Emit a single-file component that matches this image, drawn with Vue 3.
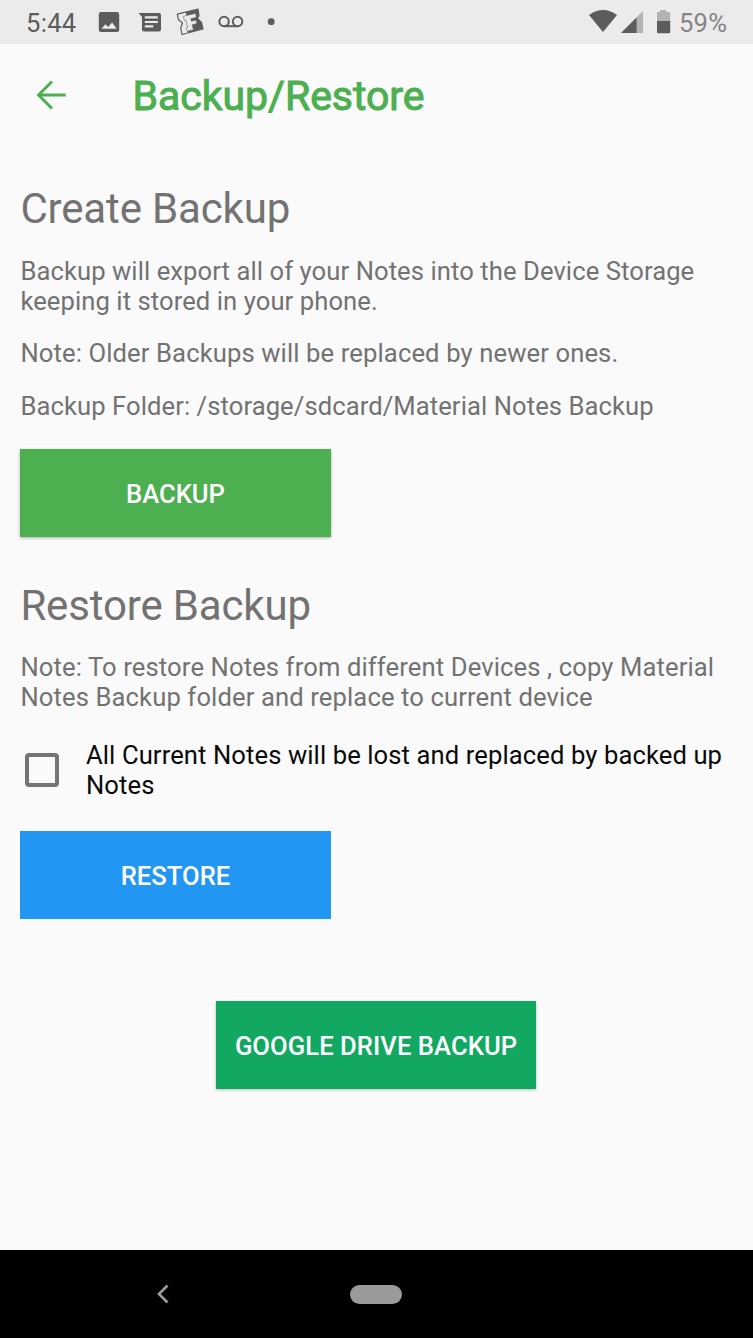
<script setup>
import { ref } from 'vue'

const confirmed = ref(false)
</script>

<template>
  <div class="screen">
    <div class="status">
      <span class="clock">5:44</span>
      <svg class="notifications" width="180" height="44" viewBox="0 0 180 44">
        <g fill="#5c5c5c">
          <path fill-rule="evenodd" d="M6 12h16a2.200 2.200 0 0 1 2.200 2.200v15.600a2.200 2.200 0 0 1-2.200 2.200H6a2.200 2.200 0 0 1-2.200-2.200V14.200A2.200 2.200 0 0 1 6 12zM6.500 28.700h15.200l-4.600-6.300-4 4.700-2.700-2.900z" />
          <path fill-rule="evenodd" d="M43.500 13H64a2 2 0 0 1 2 2v14.500a2 2 0 0 1-2 2H49a2 2 0 0 1-2-2V17zM49.800 16.300v2.200h13v-2.200zM49.800 20.900v2.200h13v-2.200zM49.800 25.300v2.200h8.500v-2.200z" />
          <path d="M91 12.200 103 9.200 104 15.500 102.500 18.500 106.500 22.500 108 29 93 32.800 92 25z" />
        </g>
        <path d="M82.300 14.200 103 9.200 104 15.500 102.500 18.500 106.500 22.500 108 29 87 34.500 85.700 28 87.500 23 83.500 19.800z" fill="none" stroke="#5c5c5c" stroke-width="1.200" stroke-linejoin="round" />
        <path d="M88.300 16.300 100.500 13.400 101.400 17.300 95.800 18.700 96.400 21.200 101 20.100 101.800 23.500 97.200 24.700 98.400 29.700 92 31.300 91.300 28 92.600 27.600 90.800 19.800 89.200 20.200z" fill="#ebebeb" stroke="#5c5c5c" stroke-width="0.500" />
        <g fill="none" stroke="#5c5c5c" stroke-width="2">
          <circle cx="129.100" cy="21.500" r="4.700" />
          <circle cx="142.600" cy="21.500" r="4.700" />
          <path d="M129 26.200h13.600" />
        </g>
        <circle cx="176.200" cy="21.700" r="3.400" fill="#5c5c5c" />
      </svg>
      <svg class="signals" width="90" height="44" viewBox="0 0 90 44">
        <path d="M4 15q14-10 28 0L18 32z" fill="#5c5c5c" />
        <path d="M58 11v22H36z" fill="#b3b3b3" />
        <path d="M51.600 17.400V33H36z" fill="#5c5c5c" />
        <path d="M72 12h3v-2h6v2h3a1.200 1.200 0 0 1 1.200 1.200V22H72z" fill="#b3b3b3" />
        <path d="M72 21h13.200v11a1.200 1.200 0 0 1-1.200 1.200H73.200A1.200 1.200 0 0 1 72 32z" fill="#5c5c5c" />
      </svg>
      <span class="percent">59%</span>
    </div>

    <header class="toolbar">
      <svg width="32" height="32" viewBox="0 0 32 32" fill="none" stroke="#4caf50" stroke-width="2.900">
        <path d="M30.700 16H4M17 2.500 3.500 16 17 29.500" />
      </svg>
      <h1>Backup/Restore</h1>
    </header>

    <main class="content">
      <h2 class="create-title">Create Backup</h2>
      <p class="t1">Backup will export all of your Notes into the Device Storage<br />keeping it stored in your phone.</p>
      <p class="t2">Note: Older Backups will be replaced by newer ones.</p>
      <p class="t3">Backup Folder: /storage/sdcard/Material Notes Backup</p>
      <button class="btn backup">BACKUP</button>

      <h2 class="restore-title">Restore Backup</h2>
      <p class="t4">Note: To restore Notes from different Devices , copy Material<br />Notes Backup folder and replace to current device</p>
      <label class="check">
        <input v-model="confirmed" type="checkbox" />
        <span>All Current Notes will be lost and replaced by backed up<br />Notes</span>
      </label>
      <button class="btn restore">RESTORE</button>
      <button class="btn drive">GOOGLE DRIVE BACKUP</button>
    </main>

    <nav class="navbar">
      <svg width="16" height="22" viewBox="0 0 16 22" fill="none" stroke="#9a9a9a" stroke-width="2.700">
        <path d="M12.500 2.500 4 11l8.500 8.500" />
      </svg>
      <span class="home"></span>
    </nav>
  </div>
</template>

<style>
body {
  margin: 0;
  background: #fafafa;
}
</style>

<style scoped>
.screen {
  display: flex;
  flex-direction: column;
  width: 753px;
  height: 1338px;
  overflow: hidden;
  background: #fafafa;
  color: #727272;
  font-family: Roboto, sans-serif;
  white-space: nowrap;
}
.status {
  display: flex;
  align-items: center;
  flex: none;
  height: 44px;
  background: #ebebeb;
  font-size: 25.600px;
}
.clock {
  width: 69px;
  padding-left: 26px;
  padding-top: 2px;
  color: #5c5c5c;
  letter-spacing: 0.300px;
}
.signals {
  margin-left: 310px;
}
.percent {
  margin-left: 4px;
  padding-top: 2px;
  color: #858585;
  letter-spacing: 0.200px;
}
.toolbar {
  display: flex;
  align-items: center;
  flex: none;
  height: 102px;
  padding-left: 35px;
}
h1 {
  margin: 2px 0 0 65.500px;
  color: #4caf50;
  font-size: 41px;
  font-weight: 400;
  line-height: 48px;
  letter-spacing: -0.030px;
  -webkit-text-stroke: 1px #4caf50;
}
.content {
  display: flex;
  flex-direction: column;
  align-items: flex-start;
  flex: 1;
  padding: 39px 20px 0;
}
h2 {
  margin: 0;
  padding-left: 0.400px;
  font-size: 42px;
  font-weight: 400;
  line-height: 48px;
  letter-spacing: -0.160px;
}
p {
  margin: 0;
  padding-left: 0.400px;
  font-size: 25.600px;
  line-height: 30px;
  letter-spacing: 0.080px;
}
.t1 {
  margin-top: 23px;
}
.t2 {
  margin-top: 22px;
  letter-spacing: 0.120px;
}
.t3 {
  margin-top: 23px;
}
.btn {
  width: 311px;
  height: 88px;
  padding: 2px 0 0;
  border: 0;
  color: #fff;
  font: 500 25.600px Roboto, sans-serif;
}
.backup {
  margin-top: 28px;
  background: #4caf50;
  box-shadow: 0 1px 3px rgba(0, 0, 0, 0.3);
}
.restore-title {
  margin-top: 45px;
}
.t4 {
  margin-top: 22px;
  letter-spacing: 0.120px;
}
.check {
  display: flex;
  align-items: center;
  margin-top: 28px;
  color: #0a0a0a;
  font-size: 25.600px;
  line-height: 30px;
  letter-spacing: 0.100px;
}
.check input {
  appearance: none;
  box-sizing: border-box;
  width: 34px;
  height: 34px;
  margin: 0 27px 0 5px;
  border: 4px solid #757575;
  border-radius: 4px;
}
.restore {
  margin-top: 31px;
  background: #2196f3;
}
.drive {
  align-self: center;
  width: 320px;
  margin: 82px 1px 0 0;
  background: #12a862;
  box-shadow: 0 1px 3px rgba(0, 0, 0, 0.25);
  letter-spacing: 0.060px;
}
.navbar {
  display: flex;
  align-items: center;
  flex: none;
  height: 88px;
  padding-left: 155px;
  box-sizing: border-box;
  background: #000;
}
.home {
  width: 52px;
  height: 19px;
  margin-left: 179.400px;
  border-radius: 10px;
  background: #9a9a9a;
}
</style>
